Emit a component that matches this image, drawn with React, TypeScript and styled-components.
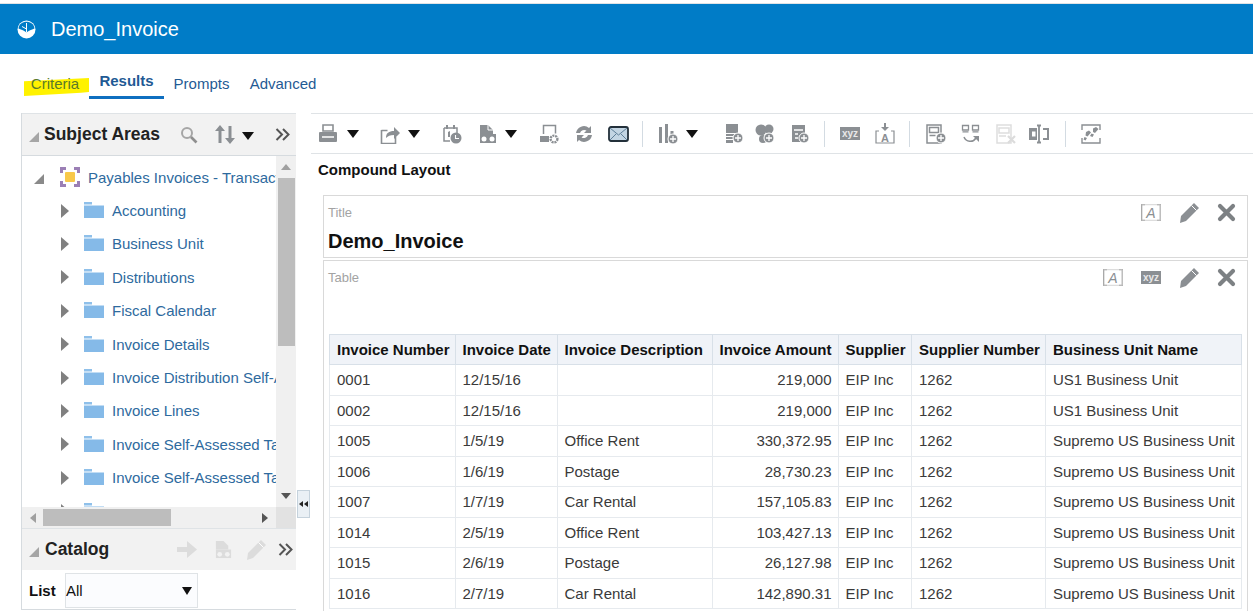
import React from "react";
import styled, { createGlobalStyle } from "styled-components";

const Global = createGlobalStyle`
  html, body { margin: 0; padding: 0; background: #fff; height: 611px; overflow: hidden; }
  body { font-family: "Liberation Sans", Arial, sans-serif; color: #222; }
  * { box-sizing: border-box; }
  svg { flex: none; display: block; }
`;

const Page = styled.div`
  width: 1253px;
  height: 611px;
  overflow: hidden;
  display: flex;
  flex-direction: column;
  padding-top: 3px;
`;
const Banner = styled.header`
  height: 51px;
  flex: none;
  background: #007cc7;
  border-top: 1px solid #dfe3e6;
  display: flex;
  align-items: center;
  padding-left: 17px;
  color: #fff;
`;
const BannerTitle = styled.h1`
  margin: 0 0 0 15px;
  font-size: 20px;
  font-weight: 400;
`;
const Tabs = styled.nav`
  height: 45px;
  flex: none;
  margin-left: 21px;
  display: flex;
  align-items: flex-end;
`;
const Tab = styled.a<{ $active?: boolean; $w: number }>`
  position: relative;
  width: ${(p) => p.$w}px;
  height: ${(p) => (p.$active ? 39 : 36)}px;
  flex: none;
  padding-top: 11px;
  text-align: center;
  font-size: 15px;
  line-height: 20px;
  font-weight: ${(p) => (p.$active ? 700 : 400)};
  color: #1f5a94;
  border-bottom: ${(p) => (p.$active ? "3px solid #0f6fc0" : "none")};
`;
const Highlight = styled.span`
  position: absolute;
  left: 3px;
  top: 15px;
  width: 65px;
  height: 18px;
  background: #fff200;
  clip-path: polygon(0 18%, 100% 0, 100% 78%, 88% 82%, 0 100%);
`;
const TabText = styled.span`
  position: relative;
  color: #5a7a2a;
`;
const Workspace = styled.div`
  flex: 1;
  min-height: 0;
  margin-top: 14px;
  display: flex;
  padding-left: 21px;
`;
const Sidebar = styled.aside`
  width: 275px;
  flex: none;
  display: flex;
  flex-direction: column;
  border-left: 1px solid #d6dbdf;
  border-bottom: 1px solid #d6dbdf;
  height: 497px;
`;
const PanelHeader = styled.div<{ $h: number }>`
  height: ${(p) => p.$h}px;
  flex: none;
  background: #f2f2f2;
  border-top: 1px solid #dfe3e6;
  display: flex;
  align-items: center;
`;
const PanelTitle = styled.h2<{ $ml: number }>`
  margin: 0 0 0 ${(p) => p.$ml}px;
  font-size: 17.5px;
  font-weight: 700;
  color: #222;
`;
const HeadSpacer = styled.div`
  flex: 1;
`;
const HeadIcon = styled.span<{ $mr: number; $w?: number }>`
  display: flex;
  flex: none;
  margin-right: ${(p) => p.$mr}px;
  width: ${(p) => p.$w ?? 20}px;
  justify-content: center;
`;
const HeadCaret = styled.span`
  flex: none;
  margin: 2px 21px 0 7px;
  border-left: 6px solid transparent;
  border-right: 6px solid transparent;
  border-top: 8px solid #111;
`;
const CornerTri = styled.span`
  width: 0;
  height: 0;
  margin-left: 7px;
  margin-top: 5px;
  border-left: 10px solid transparent;
  border-bottom: 10px solid #a6a6a6;
  flex: none;
`;
const TreeArea = styled.div`
  flex: none;
  height: 352px;
  display: flex;
  border-top: 1px solid #d6dbdf;
  background: #fff;
`;
const TreeList = styled.div`
  flex: 1;
  min-width: 0;
  overflow: hidden;
  padding-top: 4.5px;
`;
const TreeRow = styled.div<{ $root?: boolean }>`
  height: 33.4px;
  display: flex;
  align-items: center;
  white-space: nowrap;
  font-size: 15px;
  color: #2e6a9e;
  padding-left: ${(p) => (p.$root ? 12 : 39)}px;
`;
const RootTri = styled.span`
  width: 0;
  height: 0;
  flex: none;
  margin-right: 16px;
  margin-top: 3px;
  border-left: 10px solid transparent;
  border-bottom: 10px solid #8a8a8a;
`;
const RowArrow = styled.span`
  width: 0;
  height: 0;
  flex: none;
  margin-right: 15px;
  border-top: 7px solid transparent;
  border-bottom: 7px solid transparent;
  border-left: 8px solid #808080;
`;
const RowLabel = styled.span<{ $ml: number }>`
  margin-left: ${(p) => p.$ml}px;
`;
const VBar = styled.div`
  width: 20px;
  flex: none;
  background: #f0f0f0;
  display: flex;
  flex-direction: column;
  align-items: center;
`;
const ScrollBtn = styled.div`
  height: 22px;
  flex: none;
  width: 100%;
  display: flex;
  align-items: center;
  justify-content: center;
`;
const UpTri = styled.span`
  border-left: 5px solid transparent;
  border-right: 5px solid transparent;
  border-bottom: 6px solid #a0a0a0;
`;
const DownTri = styled.span`
  border-left: 5px solid transparent;
  border-right: 5px solid transparent;
  border-top: 6px solid #555;
`;
const VThumb = styled.div`
  width: 17px;
  height: 168px;
  flex: none;
  background: #bdbdbd;
`;
const VGap = styled.div`
  flex: 1;
`;
const HBar = styled.div`
  height: 21px;
  flex: none;
  display: flex;
  align-items: center;
  background: #f0f0f0;
`;
const LeftTri = styled.span`
  margin-left: 8px;
  flex: none;
  border-top: 5px solid transparent;
  border-bottom: 5px solid transparent;
  border-right: 6px solid #a0a0a0;
`;
const HThumb = styled.div`
  width: 128px;
  height: 17px;
  flex: none;
  margin-left: 7px;
  background: #bdbdbd;
`;
const RightTri = styled.span`
  margin-left: 91px;
  flex: none;
  border-top: 5px solid transparent;
  border-bottom: 5px solid transparent;
  border-left: 6px solid #555;
`;
const HCorner = styled.div`
  margin-left: auto;
  width: 20px;
  height: 21px;
  background: #e2e2e2;
`;
const ListRow = styled.div`
  flex: 1;
  display: flex;
  align-items: center;
  padding: 2px 0 0 7px;
  min-height: 0;
`;
const ListLabel = styled.label`
  font-size: 15px;
  font-weight: 700;
  width: 36px;
  flex: none;
  color: #111;
`;
const SelectBox = styled.div`
  width: 133px;
  height: 35px;
  flex: none;
  background: #fbfcfe;
  border: 1px solid #dfe3e6;
  display: flex;
  align-items: center;
  justify-content: space-between;
  font-size: 15px;
  color: #111;
  padding: 0 5px 0 0;
`;
const SelectCaret = styled.span`
  border-left: 5.5px solid transparent;
  border-right: 5.5px solid transparent;
  border-top: 8px solid #111;
`;
const Splitter = styled.div`
  width: 14px;
  flex: none;
  padding: 377px 0 0 1px;
`;
const SplitBtn = styled.div`
  width: 13px;
  height: 28px;
  background: #eaf0f5;
  border: 1px solid #c5d2dc;
  display: flex;
  align-items: center;
  justify-content: center;
  gap: 1px;
`;
const MiniLeft = styled.span`
  border-top: 3.5px solid transparent;
  border-bottom: 3.5px solid transparent;
  border-right: 4px solid #222;
`;
const Main = styled.main`
  flex: 1;
  min-width: 0;
  margin-left: 1px;
  display: flex;
  flex-direction: column;
`;
const Toolbar = styled.div`
  height: 41px;
  flex: none;
  border-top: 1px solid #dfe3e6;
  border-bottom: 1px solid #dfe3e6;
  display: flex;
  align-items: center;
  padding-left: 7px;
`;
const Tool = styled.span<{ $ml?: number; $w?: number }>`
  display: flex;
  flex: none;
  margin-left: ${(p) => p.$ml ?? 0}px;
  width: ${(p) => p.$w ?? 20}px;
  height: 22px;
  align-items: center;
  justify-content: center;
`;
const Caret = styled.span<{ $ml: number }>`
  flex: none;
  margin-left: ${(p) => p.$ml}px;
  border-left: 6px solid transparent;
  border-right: 6px solid transparent;
  border-top: 8px solid #111;
  margin-top: 1px;
`;
const Sep = styled.span<{ $ml: number }>`
  flex: none;
  width: 1px;
  height: 26px;
  margin-left: ${(p) => p.$ml}px;
  background: #d3dbe2;
`;
const LayoutLabel = styled.div`
  height: 41px;
  flex: none;
  padding: 7px 0 0 7px;
  font-size: 15px;
  line-height: 18px;
  font-weight: 700;
  color: #111;
`;
const ViewBox = styled.section`
  margin: 0 5px 2px 12px;
  flex: none;
  position: relative;
  border: 1px solid #d9d9d9;
`;
const TitleBox = styled(ViewBox)`
  height: 63px;
  padding: 9px 0 0 4px;
`;
const TableBox = styled(ViewBox)`
  height: 400px;
  margin-bottom: 0;
  padding: 9px 5px 0 4px;
`;
const ViewLabel = styled.div`
  font-size: 13px;
  line-height: 15px;
  color: #a3a3a3;
`;
const ReportTitle = styled.div`
  margin-top: 9px;
  font-size: 20px;
  line-height: 24px;
  font-weight: 700;
  color: #111;
`;
const ViewActions = styled.div`
  position: absolute;
  right: 11px;
  top: 6px;
  display: flex;
  align-items: center;
`;
const ActionIcon = styled.span<{ $ml?: number }>`
  display: flex;
  margin-left: ${(p) => p.$ml ?? 0}px;
`;
const DataTable = styled.table`
  margin: 49px 0 0 1px;
  width: 912px;
  table-layout: fixed;
  border-collapse: collapse;
  font-size: 15px;
  color: #3a3a3a;
`;
const Th = styled.th`
  height: 30px;
  padding: 0 5px 0 7px;
  background: #f0f3f8;
  border: 1px solid #d8e0e8;
  color: #111;
  font-weight: 700;
  text-align: left;
  white-space: nowrap;
  overflow: hidden;
`;
const Td = styled.td<{ $right?: boolean }>`
  height: 30.5px;
  padding: 0 6px 0 7px;
  border: 1px solid #e6eaee;
  white-space: nowrap;
  overflow: hidden;
  text-align: ${(p) => (p.$right ? "right" : "left")};
`;

const G = "#8b8f93";

const Svg = ({ w = 20, h = 20, children }: { w?: number; h?: number; children: React.ReactNode }) => (
  <svg width={w} height={h} viewBox={`0 0 ${w} ${h}`} fill={G}>{children}</svg>
);
const PlusBadge = ({ x = 14, y = 14 }: { x?: number; y?: number }) => (
  <g>
    <circle cx={x} cy={y} r={5} fill={G} stroke="#fff" strokeWidth={1} />
    <path d={`M${x - 3} ${y}h6M${x} ${y - 3}v6`} stroke="#fff" strokeWidth={1.3} />
  </g>
);

const Logo = () => (
  <svg width="19" height="19" viewBox="0 0 19 19">
    <circle cx="9.5" cy="9.5" r="9" fill="#fff" />
    <path d="M1.5 8.5C5 10 7 10.5 9.5 12.5 12 10.5 14 10 17.5 8.5 17 4 13.5 1.8 9.5 1.8S2 4 1.5 8.5Z" fill="#007cc7" />
    <path d="M9.5 3v9.5M9.5 9L5 6.5" stroke="#fff" strokeWidth="1" fill="none" />
  </svg>
);
const Printer = () => (
  <Svg>
    <path d="M5 1h10v6H5z" fill="none" stroke={G} strokeWidth="1.6" />
    <path d="M1 9q0-1 1-1h16q1 0 1 1v8q0 1-1 1H2q-1 0-1-1z" />
    <path d="M4 13h12" stroke="#fff" strokeWidth="1.5" />
  </Svg>
);
const Share = () => (
  <Svg>
    <path d="M1.5 6.5h6M1.5 6v13.5h14V13" fill="none" stroke={G} strokeWidth="1.6" />
    <path d="M6 14c0-5 3-7 8-7V3l6 6-6 6v-4c-4 0-6 1-8 3z" />
  </Svg>
);
const Schedule = () => (
  <Svg>
    <path d="M2 4h13v5M2 4v13h6" fill="none" stroke={G} strokeWidth="1.5" />
    <path d="M4 1h2v4H4zM11 1h2v4h-2zM6 8l2-1v6H6z" />
    <circle cx="14" cy="14" r="5.5" />
    <path d="M13.5 11v3.5h3.5" stroke="#fff" strokeWidth="1.1" fill="none" />
  </Svg>
);
const DocGlasses = () => (
  <Svg>
    <path d="M2 1h8l5 5v4H2z" />
    <path d="M10 1v5h5" fill="none" stroke="#fff" strokeWidth="1" />
    <path d="M2 10h16v9h-16z" />
    <circle cx="6" cy="15" r="2.5" fill="#fff" />
    <circle cx="14" cy="15" r="2.5" fill="#fff" />
  </Svg>
);
const DocGear = () => (
  <Svg>
    <path d="M4.5 10V1.5h12v8" fill="none" stroke={G} strokeWidth="1.5" />
    <path d="M1 12h9v6H1z" />
    <circle cx="15" cy="15" r="3.4" fill="none" stroke={G} strokeWidth="2.4" strokeDasharray="2 .8" />
  </Svg>
);
const Refresh = () => (
  <Svg>
    <path d="M2 9a8 8 0 0 1 13-5l2-2v7h-7l2.5-2.5A4.5 4.5 0 0 0 6 9z" />
    <path d="M18 11a8 8 0 0 1-13 5l-2 2v-7h7l-2.5 2.5A4.5 4.5 0 0 0 14 11z" />
  </Svg>
);
const Mail = () => (
  <svg width="21" height="16" viewBox="0 0 21 16">
    <rect x="1" y="1" width="19" height="14" rx="2" fill="#c3d5e3" stroke="#23303a" strokeWidth="1.8" />
    <path d="M2 2l8.5 7L19 2M2 14l6-6M19 14l-6-6" stroke="#5f7f98" strokeWidth="1" fill="none" />
  </svg>
);
const Bars = () => (
  <Svg>
    <path d="M0 3h3v16H0zM6 0h3v19H6zM11.5 7h3v5h-3z" />
    <PlusBadge x={14} y={15} />
  </Svg>
);
const ListPlus = () => (
  <Svg>
    <path d="M1 0h12v9H1zM1 10h8v2H1zM1 13h7v2H1zM1 16h7v3H1z" />
    <PlusBadge x={13} y={14} />
  </Svg>
);
const Bubbles = () => (
  <Svg>
    <circle cx="6" cy="6" r="5.5" />
    <circle cx="14" cy="5" r="4.5" />
    <circle cx="8" cy="15" r="4" />
    <PlusBadge x={14} y={14} />
  </Svg>
);
const CalcPlus = () => (
  <Svg>
    <path d="M2 1h13v17H2z" />
    <path d="M4 6h9M5 10h3M5 14h3" stroke="#fff" strokeWidth="1.3" />
    <PlusBadge x={14} y={14} />
  </Svg>
);
const Xyz = () => (
  <svg width="20" height="13" viewBox="0 0 20 13">
    <rect width="20" height="13" fill={G} />
    <text x="10" y="10" textAnchor="middle" fontSize="10" fontWeight="700" fontFamily="Liberation Sans" fill="#e8e8e8">xyz</text>
  </svg>
);
const TextInsert = () => (
  <Svg h={21}>
    <path d="M4 8H1v12h18V8h-3" fill="none" stroke={G} strokeWidth="1.2" />
    <path d="M9 0h2v4h3l-4 4-4-4h3z" />
    <text x="10" y="18.5" textAnchor="middle" fontSize="11" fontWeight="700" fontFamily="Liberation Sans" fill={G}>A</text>
  </Svg>
);
const LayoutPlus = () => (
  <Svg>
    <path d="M1 1h14v18H1zM3.5 3.5h9v5h-9zM3.5 11.5h6" fill="none" stroke={G} strokeWidth="1.5" />
    <PlusBadge x={15} y={14} />
  </Svg>
);
const LayoutSwap = () => (
  <Svg>
    <path d="M1.5 1.5h6v4.5h-6zM1.5 7.8h6M11.5 1.5h6v4.5h-6zM11.5 7.8h6" fill="none" stroke={G} strokeWidth="1.3" />
    <path d="M3 13c2 5 9 6 12 1" fill="none" stroke={G} strokeWidth="1.5" />
    <path d="M12 12h6v6z" />
  </Svg>
);
const LayoutX = () => (
  <Svg>
    <path d="M1 1h14v18H1zM3 4h10v5H3zM3 12h7" fill="none" stroke="#dedede" strokeWidth="1.5" />
    <path d="M12 12l7 7M19 12l-7 7" stroke="#dcdcdc" strokeWidth="2.2" />
  </Svg>
);
const Columns = () => (
  <Svg>
    <path d="M0 4h8v12H0z" />
    <rect x="3" y="7.5" width="3.5" height="5" fill="#fff" />
    <path d="M14 5h5v10h-5" fill="none" stroke={G} strokeWidth="2" />
    <path d="M8 1.5h4M8 18.5h4M10 1.5v17" fill="none" stroke={G} strokeWidth="1.8" />
  </Svg>
);
const Steps = () => (
  <Svg>
    <path d="M1 6V1h18v5M1 14v5h18v-5" fill="none" stroke={G} strokeWidth="1.4" />
    <path d="M12 4.5l3-1.5 2.5 2-3.5 4-2-1zM10.5 9.5l2.5 1-1.5 2.5-2.5-1zM5 8l3-1.5 2 2-3.5 4-2-1zM3.5 13l2.5 1-1.5 2.5-2-1z" />
  </Svg>
);
const FrameA = () => (
  <svg width="20" height="17" viewBox="0 0 20 17">
    <path d="M4 .7H.7v15.6H4M16 .7h3.3v15.6H16" fill="none" stroke="#a0a0a0" strokeWidth="1.2" />
    <path d="M.7.7h18.6v15.6H.7" fill="none" stroke="#c9c9c9" strokeWidth=".8" />
    <text x="10" y="14" textAnchor="middle" fontSize="14" fontStyle="italic" fontFamily="Liberation Sans" fill="#8b8f93">A</text>
  </svg>
);
const Pencil = ({ c = G }: { c?: string }) => (
  <svg width="21" height="21" viewBox="0 0 21 21" fill={c}>
    <path d="M15 1l5 5L7 19l-6 2 1-7z" />
    <path d="M12.5 3.5l5 5" stroke="#fff" strokeWidth="1" />
  </svg>
);
const CloseX = () => (
  <svg width="19" height="19" viewBox="0 0 19 19">
    <path d="M3 3l13 13M16 3L3 16" stroke="#7d8184" strokeWidth="4.2" strokeLinecap="round" />
  </svg>
);
const Search = () => (
  <svg width="18" height="18" viewBox="0 0 18 18">
    <circle cx="7" cy="7" r="5" fill="none" stroke="#a6a6a6" strokeWidth="2" />
    <path d="M11 11l5.5 5.5" stroke="#8f8f8f" strokeWidth="2.6" />
  </svg>
);
const Sort = () => (
  <svg width="20" height="19" viewBox="0 0 20 19" fill="#8b8f93">
    <path d="M5 0l5 6H6.5v12h-3V6H0zM13.5 1h3v12H20l-5 6-5-6h3.5z" />
  </svg>
);
const Chevrons = () => (
  <svg width="15" height="13" viewBox="0 0 15 13">
    <path d="M1.5 1l5.5 5.5L1.5 12M8 1l5.5 5.5L8 12" fill="none" stroke="#555" strokeWidth="2" />
  </svg>
);
const Arrow = () => (
  <svg width="20" height="17" viewBox="0 0 20 17" fill="#dcdcdc">
    <path d="M0 6h10V0l10 8.5L10 17v-6H0z" />
  </svg>
);
const GhostGlasses = () => (
  <svg width="19" height="19" viewBox="0 0 20 20" fill="#dcdcdc">
    <path d="M2 1h8l5 5v4H2z" />
    <path d="M2 10h16v9h-16z" />
    <circle cx="6" cy="15" r="2.5" fill="#f2f2f2" />
    <circle cx="14" cy="15" r="2.5" fill="#f2f2f2" />
  </svg>
);
const Folder = () => (
  <svg width="20" height="17" viewBox="0 0 20 17">
    <path d="M0 0h8v2.5H0z" fill="#8fc0ea" />
    <path d="M0 3.5h20V16H0z" fill="#85bae8" />
  </svg>
);
const SubjectIcon = () => (
  <svg width="20" height="20" viewBox="0 0 20 20">
    <path d="M0 0h6v3H3v3H0zM14 0h6v6h-3V3h-3zM0 14h3v3h3v3H0zM17 14h3v6h-6v-3h3z" fill="#9b7fb5" />
    <rect x="5" y="5" width="10" height="10" rx="1" fill="#f8c84a" />
  </svg>
);

const folders = [
  "Accounting", "Business Unit", "Distributions", "Fiscal Calendar", "Invoice Details",
  "Invoice Distribution Self-Asse", "Invoice Lines", "Invoice Self-Assessed Tax", "Invoice Self-Assessed Tax", "",
];
const cols = [
  ["Invoice Number", 125.5], ["Invoice Date", 102], ["Invoice Description", 155], ["Invoice Amount", 126],
  ["Supplier", 73.5], ["Supplier Number", 134], ["Business Unit Name", 196],
] as const;
const rows = [
  ["0001", "12/15/16", "", "219,000", "US1 Business Unit"],
  ["0002", "12/15/16", "", "219,000", "US1 Business Unit"],
  ["1005", "1/5/19", "Office Rent", "330,372.95", "Supremo US Business Unit"],
  ["1006", "1/6/19", "Postage", "28,730.23", "Supremo US Business Unit"],
  ["1007", "1/7/19", "Car Rental", "157,105.83", "Supremo US Business Unit"],
  ["1014", "2/5/19", "Office Rent", "103,427.13", "Supremo US Business Unit"],
  ["1015", "2/6/19", "Postage", "26,127.98", "Supremo US Business Unit"],
  ["1016", "2/7/19", "Car Rental", "142,890.31", "Supremo US Business Unit"],
];

export default function App() {
  return (
    <Page>
      <Global />
      <Banner>
        <Logo />
        <BannerTitle>Demo_Invoice</BannerTitle>
      </Banner>
      <Tabs>
        <Tab $w={68}><Highlight /><TabText>Criteria</TabText></Tab>
        <Tab $active $w={75}>Results</Tab>
        <Tab $w={75}>Prompts</Tab>
        <Tab $w={88}>Advanced</Tab>
      </Tabs>
      <Workspace>
        <Sidebar>
          <PanelHeader $h={42}>
            <CornerTri />
            <PanelTitle $ml={5}>Subject Areas</PanelTitle>
            <HeadSpacer />
            <HeadIcon $mr={16}><Search /></HeadIcon>
            <HeadIcon $mr={0}><Sort /></HeadIcon>
            <HeadCaret />
            <HeadIcon $mr={6} $w={15}><Chevrons /></HeadIcon>
          </PanelHeader>
          <TreeArea>
            <TreeList>
              <TreeRow $root>
                <RootTri />
                <SubjectIcon />
                <RowLabel $ml={8}>Payables Invoices - Transaction</RowLabel>
              </TreeRow>
              {folders.map((f, i) => (
                <TreeRow key={i}>
                  <RowArrow />
                  <Folder />
                  <RowLabel $ml={8}>{f}</RowLabel>
                </TreeRow>
              ))}
            </TreeList>
            <VBar>
              <ScrollBtn><UpTri /></ScrollBtn>
              <VThumb />
              <VGap />
              <ScrollBtn><DownTri /></ScrollBtn>
            </VBar>
          </TreeArea>
          <HBar>
            <LeftTri />
            <HThumb />
            <RightTri />
            <HCorner />
          </HBar>
          <PanelHeader $h={42}>
            <CornerTri />
            <PanelTitle $ml={6}>Catalog</PanelTitle>
            <HeadSpacer />
            <HeadIcon $mr={16}><Arrow /></HeadIcon>
            <HeadIcon $mr={13}><GhostGlasses /></HeadIcon>
            <HeadIcon $mr={12}><Pencil c="#dcdcdc" /></HeadIcon>
            <HeadIcon $mr={3} $w={15}><Chevrons /></HeadIcon>
          </PanelHeader>
          <ListRow>
            <ListLabel>List</ListLabel>
            <SelectBox>All<SelectCaret /></SelectBox>
          </ListRow>
        </Sidebar>
        <Splitter>
          <SplitBtn><MiniLeft /><MiniLeft /></SplitBtn>
        </Splitter>
        <Main>
          <Toolbar>
            <Tool><Printer /></Tool><Caret $ml={9} />
            <Tool $ml={21}><Share /></Tool><Caret $ml={8} />
            <Tool $ml={22}><Schedule /></Tool>
            <Tool $ml={16}><DocGlasses /></Tool><Caret $ml={7} />
            <Tool $ml={22}><DocGear /></Tool>
            <Tool $ml={15}><Refresh /></Tool>
            <Tool $ml={14} $w={21}><Mail /></Tool>
            <Sep $ml={13} />
            <Tool $ml={16}><Bars /></Tool><Caret $ml={7} />
            <Tool $ml={27}><ListPlus /></Tool>
            <Tool $ml={10}><Bubbles /></Tool>
            <Tool $ml={15}><CalcPlus /></Tool>
            <Sep $ml={14} />
            <Tool $ml={15}><Xyz /></Tool>
            <Tool $ml={15}><TextInsert /></Tool>
            <Sep $ml={14} />
            <Tool $ml={16}><LayoutPlus /></Tool>
            <Tool $ml={15}><LayoutSwap /></Tool>
            <Tool $ml={15}><LayoutX /></Tool>
            <Tool $ml={13}><Columns /></Tool>
            <Sep $ml={16} />
            <Tool $ml={15}><Steps /></Tool>
          </Toolbar>
          <LayoutLabel>Compound Layout</LayoutLabel>
          <TitleBox>
            <ViewLabel>Title</ViewLabel>
            <ReportTitle>Demo_Invoice</ReportTitle>
            <ViewActions>
              <ActionIcon><FrameA /></ActionIcon>
              <ActionIcon $ml={18}><Pencil /></ActionIcon>
              <ActionIcon $ml={17}><CloseX /></ActionIcon>
            </ViewActions>
          </TitleBox>
          <TableBox>
            <ViewLabel>Table</ViewLabel>
            <ViewActions>
              <ActionIcon><FrameA /></ActionIcon>
              <ActionIcon $ml={18}><Xyz /></ActionIcon>
              <ActionIcon $ml={18}><Pencil /></ActionIcon>
              <ActionIcon $ml={17}><CloseX /></ActionIcon>
            </ViewActions>
            <DataTable>
              <colgroup>
                {cols.map(([n, w]) => <col key={n} style={{ width: w }} />)}
              </colgroup>
              <thead>
                <tr>{cols.map(([n]) => <Th key={n}>{n}</Th>)}</tr>
              </thead>
              <tbody>
                {rows.map((r) => (
                  <tr key={r[0]}>
                    <Td>{r[0]}</Td>
                    <Td>{r[1]}</Td>
                    <Td>{r[2]}</Td>
                    <Td $right>{r[3]}</Td>
                    <Td>EIP Inc</Td>
                    <Td>1262</Td>
                    <Td>{r[4]}</Td>
                  </tr>
                ))}
              </tbody>
            </DataTable>
          </TableBox>
        </Main>
      </Workspace>
    </Page>
  );
}
